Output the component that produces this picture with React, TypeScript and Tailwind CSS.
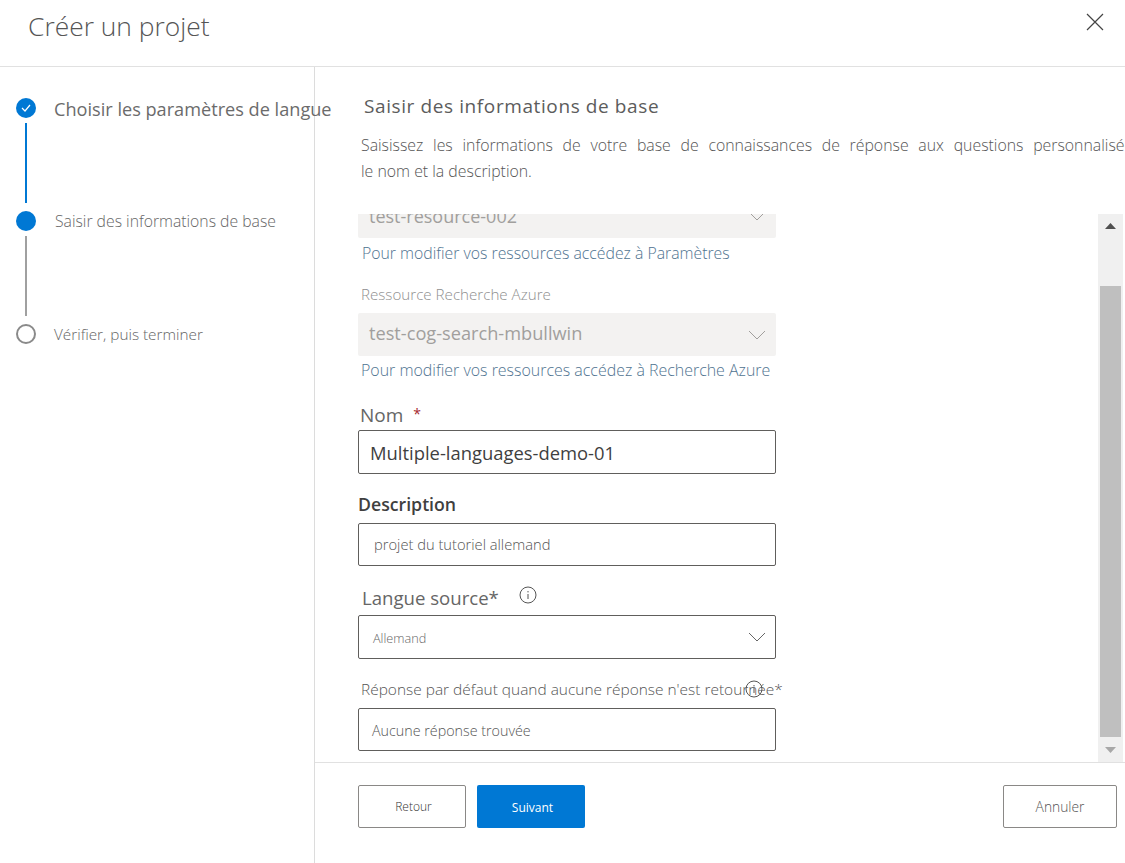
import React from 'react';

const FONT = "font-['Open_Sans','Noto_Sans',sans-serif]";

const Chevron = ({ className }: { className: string }) => (
  <svg className={className} width="18" height="10" viewBox="0 0 18 10" fill="none" stroke="currentColor" strokeWidth="1">
    <path d="M1 1l8 8 8-8" />
  </svg>
);

const InfoIcon = ({ className }: { className: string }) => (
  <svg className={className} width="18" height="18" viewBox="0 0 18 18" fill="none" stroke="#555" strokeWidth="1">
    <circle cx="9" cy="9" r="8" />
    <path d="M9 8v5M9 5v1.4" />
  </svg>
);

const Step = ({ dot, label, labelClass, line }: { dot: React.ReactNode; label: string; labelClass: string; line?: string }) => (
  <div className="flex h-[113px] items-start">
    <div className="flex w-[54px] shrink-0 flex-col items-start pl-4">
      {dot}
      {line && <div className={`ml-[9px] mt-[5px] h-[80px] w-[2px] ${line}`} />}
    </div>
    <div className={labelClass}>{label}</div>
  </div>
);

export default function App() {
  return (
    <div className={`flex h-[863px] w-[1125px] flex-col overflow-hidden bg-white ${FONT}`}>
      <header className="flex h-[67px] shrink-0 items-start justify-between border-b border-[#e1e1e1] pl-7 pr-[21px]">
        <h1 className="mt-[7px] text-[26.4px] leading-[38px] font-light text-[#555]">Créer un projet</h1>
        <svg className="mt-[13px] text-[#444]" width="18" height="18" viewBox="0 0 18 18" fill="none" stroke="currentColor" strokeWidth="1.2">
          <path d="M1 1l16 16M17 1L1 17" />
        </svg>
      </header>

      <div className="flex min-h-0 flex-1">
        <aside className="w-[315px] shrink-0 border-r border-[#dcdcdc] pt-[31px]">
          <Step
            dot={
              <div className="flex h-[20px] w-[20px] items-center justify-center rounded-full bg-[#0078d4]">
                <svg width="10" height="8" viewBox="0 0 10 8" fill="none" stroke="white" strokeWidth="1.2"><path d="M1 4l3 3 5-6" /></svg>
              </div>
            }
            label="Choisir les paramètres de langue"
            labelClass="-mt-px whitespace-nowrap text-[18.15px] leading-6 font-medium text-[#6b6b6b]"
            line="bg-[#0078d4]"
          />
          <Step
            dot={<div className="h-[20px] w-[20px] rounded-full bg-[#0078d4]" />}
            label="Saisir des informations de base"
            labelClass="ml-px whitespace-nowrap text-[15.75px] leading-[20px] font-light text-[#666]"
            line="bg-[#a0a0a0]"
          />
          <Step
            dot={<div className="h-[20px] w-[20px] rounded-full border-2 border-[#8a8a8a]" />}
            label="Vérifier, puis terminer"
            labelClass="whitespace-nowrap text-[15.3px] leading-[20px] font-light text-[#666]"
          />
        </aside>

        <main className="flex min-w-0 flex-1 flex-col overflow-hidden">
          <div className="h-[147px] shrink-0 pl-[49px] pt-[26px]">
            <h2 className="whitespace-nowrap text-[19px] leading-[26px] tracking-[0.6px] text-[#5c5c5c]">Saisir des informations de base</h2>
            <p className="mt-[13px] -ml-[3px] w-[790px] text-[15.85px] leading-[26px] font-light text-[#555]">
              <span className="block whitespace-nowrap [word-spacing:5.6px]">Saisissez les informations de votre base de connaissances de réponse aux questions personnalisées,</span>
              <span className="block whitespace-nowrap">le nom et la description.</span>
            </p>
          </div>

          <div className="flex min-h-0 flex-1">
            <div className="relative min-w-0 flex-1 overflow-hidden pl-[43px]">
              <div className="-mt-[20px] w-[418px]">
                <div className="flex h-[44px] items-center justify-between rounded-[2px] bg-[#f3f2f1] px-[11px] pr-[10px] text-[#a19f9d]">
                  <span className="text-[18px]">test-resource-002</span>
                  <Chevron className="text-[#a19f9d]" />
                </div>
                <div className="mt-[5px] ml-1 whitespace-nowrap text-[15.8px] leading-[20px] font-light text-[#4f7390]">Pour modifier vos ressources accédez à Paramètres</div>
                <div className="mt-[22px] ml-[3px] text-[15.15px] leading-[18px] font-light text-[#8f8f8f]">Ressource Recherche Azure</div>
                <div className="mt-[10px] flex h-[43px] items-center justify-between rounded-[2px] bg-[#f3f2f1] px-[11px] pr-[10px] text-[#a19f9d]">
                  <span className="-mt-[2px] text-[18.2px]">test-cog-search-mbullwin</span>
                  <Chevron className="text-[#a19f9d]" />
                </div>
                <div className="mt-[4px] ml-[3px] whitespace-nowrap text-[15.95px] leading-[20px] font-light text-[#4f7390]">Pour modifier vos ressources accédez à Recherche Azure</div>

                <div className="mt-[22px] ml-[2px] flex h-[26px] items-center text-[#666]">
                  <span className="text-[19px]">Nom</span>
                  <span className="ml-[10px] -mt-1 text-[14px] text-[#a4262c]">*</span>
                </div>
                <div className="mt-[2px] flex h-[44px] items-center rounded-[2px] border border-[#605e5c] pl-[11px] pt-[2px] text-[18.4px] text-[#3f3f3f]">Multiple-languages-demo-01</div>

                <div className="mt-[17px] text-[17.7px] leading-[26px] font-semibold text-[#3f3f3f]">Description</div>
                <div className="mt-[6px] flex h-[43px] items-center rounded-[2px] border border-[#605e5c] pl-[15px] text-[14.7px] font-light text-[#555]">projet du tutoriel allemand</div>

                <div className="mt-[18px] ml-[4px] flex h-[28px] items-center text-[#666]">
                  <span className="text-[18.6px] font-medium">Langue source*</span>
                  <InfoIcon className="ml-[20px] -mt-[7px]" />
                </div>
                <div className="mt-[3px] flex h-[44px] items-center justify-between rounded-[2px] border border-[#605e5c] pl-[14px] pr-[9px] text-[#666]">
                  <span className="pt-[3px] text-[12.7px] font-light">Allemand</span>
                  <Chevron className="text-[#666]" />
                </div>

                <div className="relative mt-[18px] ml-[3px] h-[24px] whitespace-nowrap text-[15.45px] leading-[24px] font-light text-[#555]">
                  Réponse par défaut quand aucune réponse n'est retournée*
                  <InfoIcon className="absolute left-[384px] top-[3px]" />
                </div>
                <div className="mt-[7px] flex h-[43px] items-center rounded-[2px] border border-[#605e5c] pl-[13px] pt-[2px] text-[14.3px] font-light text-[#555]">Aucune réponse trouvée</div>
              </div>
            </div>

            <div className="mr-[2px] flex w-[25px] shrink-0 flex-col bg-[#f0f0f0]">
              <div className="flex h-[24px] items-center justify-center">
                <svg width="11" height="6" viewBox="0 0 11 6" fill="#505050"><path d="M5.5 0L11 6H0z" /></svg>
              </div>
              <div className="mx-[2px] mt-[48px] h-[451px] bg-[#bfbfbf]" />
              <div className="flex flex-1 items-center justify-center">
                <svg width="11" height="6" viewBox="0 0 11 6" fill="#a8a8a8"><path d="M0 0h11L5.5 6z" /></svg>
              </div>
            </div>
          </div>

          <footer className="flex h-[101px] shrink-0 items-start justify-between border-t border-[#e1e1e1] pl-[43px] pr-2 pt-[22px]">
            <div className="flex gap-[11px]">
              <button className="h-[43px] w-[108px] rounded-[2px] border border-[#8a8886] pl-[3px] text-[12px] font-light text-[#333]">Retour</button>
              <button className="h-[43px] w-[108px] rounded-[2px] bg-[#0078d4] pl-[3px] pt-[2px] text-[12px] text-white">Suivant</button>
            </div>
            <button className="h-[43px] w-[114px] rounded-[2px] border border-[#8a8886] pt-px text-[13.8px] font-light text-[#555]">Annuler</button>
          </footer>
        </main>
      </div>
    </div>
  );
}
